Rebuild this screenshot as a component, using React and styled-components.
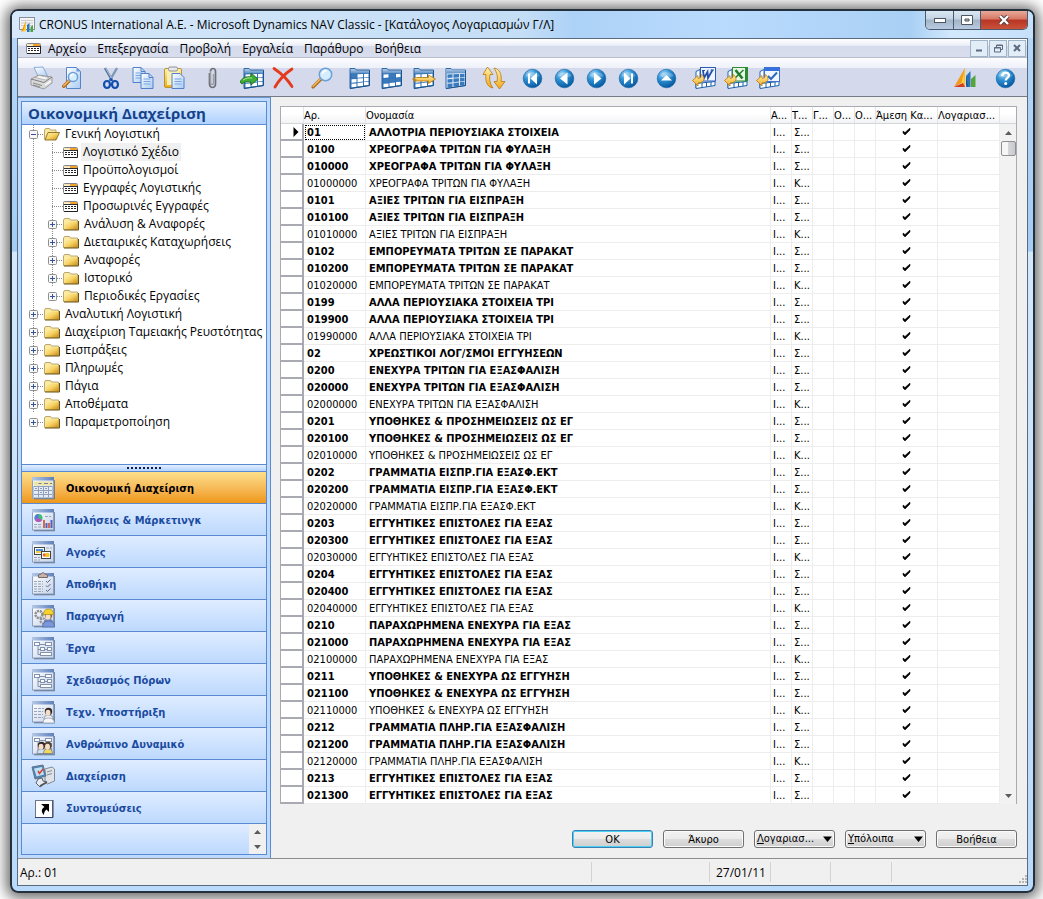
import React from "react";
import styled, { createGlobalStyle, css } from "styled-components";

const uiFont = `"Open Sans", "Noto Sans", sans-serif`;
const gridFont = `"DejaVu Sans Condensed", "DejaVu Sans", sans-serif`;

const Global = createGlobalStyle`
  * { box-sizing: border-box; }
  body { margin: 0; background: #fff; color: #000; font-family: ${uiFont}; font-size: 12px; }
  button { font: inherit; color: inherit; padding: 0; margin: 0; border: 0; background: none; }
  svg { display: block; }
`;

/* ---------- window frame ---------- */

const Desktop = styled.div`
  padding: 9px 8px 8px 10px;
  background: #fff;
`;

const Window = styled.div`
  border: 2px solid #24303c;
  border-radius: 8px;
  background: linear-gradient(#b7d8f8 0, #a4ccf4 240px, #d3e8fb 241px, #b9dafb 100%);
  box-shadow: 0 1px 14px 4px rgba(0, 0, 0, 0.6);
  padding: 0 5px 5px;
`;

const TitleBar = styled.header`
  display: flex;
  align-items: center;
  height: 27px;
  margin: 0 -5px;
  padding: 0 5px 0 7px;
  border-radius: 6px 6px 0 0;
  background: linear-gradient(90deg, #d6e8fa 0, #c4def6 50%, #add2f7 55%, #b9dbfd 70%, #a9d0f4 88%, #d2e8fd 92%, #c6e0fa 100%);
`;

const WindowTitle = styled.h1`
  flex: 1;
  margin: 0 0 0 4px;
  font-size: 12px;
  font-weight: 400;
  line-height: 20px;
  white-space: nowrap;
`;

const CaptionButtons = styled.div`
  display: flex;
  align-self: flex-start;
  height: 19px;
  border: 1px solid #4b5a6c;
  border-top: 0;
  border-radius: 0 0 5px 5px;
  overflow: hidden;
`;

const CaptionButton = styled.button`
  display: flex;
  align-items: center;
  justify-content: center;
  width: ${(p) => (p.$close ? 47 : 27)}px;
  border-left: ${(p) => (p.$first ? "0" : "1px solid #4b5a6c")};
  background: ${(p) =>
    p.$close
      ? "linear-gradient(#e9a99a 0, #d77763 45%, #b93524 50%, #c9523a 100%)"
      : "linear-gradient(#dbe7f3 0, #c3d2e2 45%, #a1b4c8 50%, #b8cbe0 100%)"};
`;

const Client = styled.div`
  border: 1px solid #5b6b7e;
  background: #f0f0f0;
`;

/* ---------- menu and tool bars ---------- */

const MenuBar = styled.nav`
  display: flex;
  align-items: center;
  height: 19px;
  padding: 0 1px 0 8px;
  border-bottom: 1px solid #b6bccc;
  background: linear-gradient(#fff 0, #eceff8 35%, #d6dbec 40%, #d9deef 100%);
`;

const MenuItems = styled.div`
  display: flex;
  flex: 1;
  gap: 11px;
  margin-left: 7px;
`;

const MenuItem = styled.button`
  padding-top: 2px;
  line-height: 18px;
  white-space: nowrap;
`;

const ChildButtons = styled.div`
  display: flex;
  gap: 1px;
`;

const ChildButton = styled.button`
  display: flex;
  align-items: center;
  justify-content: center;
  width: 18px;
  height: 17px;
  border: 1px solid #a0b4c8;
  background: #e2edf8;
`;

const ToolBar = styled.div`
  display: flex;
  align-items: center;
  gap: 14px;
  height: 39px;
  padding: 2px 10px 0 12px;
  border-bottom: 1px solid #767b88;
  background: linear-gradient(#fdfdff 0, #eef1f9 25%, #d4daec 26%, #d4daec 100%);
`;

const ToolGroup = styled.div`
  display: flex;
  gap: ${(p) => (p.$end ? 16 : 8)}px;
  margin-left: ${(p) => (p.$end ? "auto" : "0")};
`;

const ToolButton = styled.button`
  width: 24px;
  height: 24px;
`;

/* ---------- body ---------- */

const Body = styled.div`
  display: flex;
`;

const Sidebar = styled.aside`
  display: flex;
  width: 253px;
  flex: none;
  padding: 3px;
  border-top: 1px solid #6a97d6;
  border-right: 1px solid #5a8bd0;
  background: #bfdaff;
`;

const SidePanel = styled.div`
  display: flex;
  flex-direction: column;
  flex: 1;
  border: 1px solid #5a8bd0;
  background: #fff;
`;

const SideTitle = styled.h2`
  margin: 0;
  height: 23px;
  padding-left: 6px;
  border-bottom: 1px solid #5a8bd0;
  background: linear-gradient(#e3efff, #afd2ff);
  color: #15428b;
  font: 700 15px/22px ${uiFont};
  white-space: nowrap;
`;

const Tree = styled.ul`
  flex: 1;
  list-style: none;
  margin: 0;
  padding: 0 0 0 7px;
`;

const SubTree = styled.ul`
  list-style: none;
  margin: 0;
  padding: 0 0 0 19px;
  background: linear-gradient(#8a8a8a 50%, transparent 50%) 4px 0 / 1px 2px repeat-y;
`;

const dotsDown = css`
  background-image: linear-gradient(#8a8a8a 50%, transparent 50%);
  background-size: 1px 2px;
  background-position: 4px 0;
  background-repeat: repeat-y;
`;

const TreeRow = styled.div`
  display: flex;
  align-items: center;
  height: 18px;
  ${(p) => !p.$last && dotsDown}
`;

const Expander = styled.button`
  width: 9px;
  height: 9px;
  flex: none;
`;

const Stem = styled.span`
  width: ${(p) => (p.$long ? 11 : 6)}px;
  margin-left: ${(p) => (p.$long ? 4 : 0)}px;
  height: 1px;
  flex: none;
  background: repeating-linear-gradient(90deg, #8a8a8a 0 1px, transparent 1px 2px);
`;

const TreeLabel = styled.a`
  margin-left: 3px;
  padding: 0 2px;
  line-height: 18px;
  background: ${(p) => (p.$selected ? "#f0f0f0" : "transparent")};
  color: #000;
  text-decoration: none;
  white-space: nowrap;
`;

const Splitter = styled.div`
  display: flex;
  align-items: center;
  justify-content: center;
  height: 8px;
  border-top: 1px solid #5a8bd0;
  border-bottom: 1px solid #5a8bd0;
  background: linear-gradient(#e3efff, #b4d3ff);
`;

const SplitterDots = styled.span`
  width: 34px;
  height: 2px;
  background: repeating-linear-gradient(90deg, #10204a 0 2px, transparent 2px 4px);
`;

const NavButton = styled.button`
  display: flex;
  align-items: center;
  gap: 11px;
  height: 32px;
  padding-left: 9px;
  border-bottom: 1px solid #5a8bd0;
  background: ${(p) =>
    p.$active ? "linear-gradient(#fddf8b, #f6b550 60%, #ee9719)" : "linear-gradient(#dfecff, #bdd9ff)"};
  color: ${(p) => (p.$active ? "#000" : "#1b4ba0")};
  font: 700 11px/16px ${gridFont};
  white-space: nowrap;
`;

const NavLabel = styled.span`
  padding-top: 2px;
`;

const NavFooter = styled.div`
  display: flex;
  justify-content: flex-end;
  height: 30px;
  background: linear-gradient(#dfecff, #bdd9ff);
`;

const Spinner = styled.div`
  display: flex;
  flex-direction: column;
  width: 17px;
  background: #f0f0f0;
`;

const ArrowButton = styled.button`
  display: flex;
  align-items: center;
  justify-content: center;
  height: ${(p) => (p.$tall ? 17 : 15)}px;
`;

/* ---------- account grid ---------- */

const Main = styled.main`
  flex: 1;
  min-width: 0;
  padding: 9px 10px 10px 9px;
`;

const GridFrame = styled.div`
  display: flex;
  border: 1px solid #a9aab4;
  border-bottom: 0;
  background: #fff;
`;

const Grid = styled.table`
  flex: 1;
  width: 100%;
  min-width: 0;
  table-layout: fixed;
  border-collapse: separate;
  border-spacing: 0;
  font: 11px/14px ${gridFont};
`;

const Col = styled.col`
  width: ${(p) => (p.$w ? `${p.$w}px` : "auto")};
`;

const HeadCell = styled.th`
  height: 17px;
  padding: 2px 0 0;
  border-right: 1px solid #e2e4e8;
  border-bottom: 1px solid #d5d5d5;
  background: linear-gradient(#fff 40%, #f2f3f5);
  font-weight: 400;
  text-align: left;
  white-space: nowrap;
  overflow: hidden;
`;

const SelectorCell = styled.td`
  height: 17px;
  padding: 0;
  border-right: 2px solid #a9a9b1;
  border-bottom: 2px solid #a9a9b1;
`;

const Cell = styled.td`
  height: 17px;
  padding: 2px 0 0 ${(p) => (p.$pad === undefined ? 2 : p.$pad)}px;
  border-right: 1px solid #ededed;
  border-bottom: 1px solid #ededed;
  font-weight: ${(p) => (p.$bold ? 700 : 400)};
  white-space: nowrap;
  overflow: hidden;
  outline: ${(p) => (p.$focus ? "1px dotted #000" : "none")};
  outline-offset: -2px;
`;

const Scroller = styled.div`
  display: flex;
  flex-direction: column;
  width: 16px;
  flex: none;
  background: #f2f2f2;
`;

const ScrollHead = styled.div`
  height: 17px;
  background: linear-gradient(#fff 40%, #f2f3f5);
  border-bottom: 1px solid #d5d5d5;
`;

const ScrollTrack = styled.div`
  flex: 1;
`;

const ScrollThumb = styled.div`
  align-self: flex-end;
  width: 15px;
  height: 15px;
  border: 1px solid #8e8f94;
  border-radius: 2px;
  background: linear-gradient(90deg, #f6f6f6 45%, #d6d6d9 50%, #c9cacd);
`;

const Actions = styled.div`
  display: flex;
  justify-content: flex-end;
  gap: 10px;
  margin-top: 26px;
`;

const ActionButton = styled.button`
  display: flex;
  align-items: center;
  justify-content: ${(p) => (p.$menu ? "space-between" : "center")};
  width: 81px;
  height: 18px;
  padding: ${(p) => (p.$menu ? "0 2px" : "2px 0 0")};
  border: ${(p) => (p.$primary ? "1px solid #3c7fb1" : "1px solid #707070")};
  border-radius: 3px;
  box-shadow: inset 0 0 0 1px ${(p) => (p.$primary ? "#48d1f5" : "#fbfbfb")};
  background: linear-gradient(#f2f2f2 0, #ebebeb 48%, #dddddd 50%, #cfcfcf 100%);
  font: 11px/14px ${gridFont};
  white-space: nowrap;
`;

const StatusBar = styled.footer`
  display: flex;
  align-items: center;
  height: 27px;
  border-top: 1px solid #8d8d8d;
  background: #f0f0f0;
  line-height: 22px;
`;

const StatusCell = styled.div`
  flex: ${(p) => (p.$w ? "none" : "1")};
  width: ${(p) => (p.$w ? `${p.$w}px` : "auto")};
  height: 20px;
  padding-left: ${(p) => (p.$w ? 6 : 2)}px;
  border-left: ${(p) => (p.$w ? "1px solid #d8d0d0" : "0")};
`;

const Grip = styled.div`
  align-self: flex-end;
  width: 11px;
  height: 12px;
`;

/* ---------- drawings ---------- */

const Svg = ({ s = 24, h, vb, children }) => (
  <svg width={s} height={h || s} viewBox={vb || `0 0 ${s} ${h || s}`} fill="none" aria-hidden="true">
    {children}
  </svg>
);

const GradientStore = styled.svg`
  position: absolute;
`;

const Defs = () => (
  <GradientStore width="0" height="0" aria-hidden="true">
    <defs>
      <radialGradient id="ball" cx="35%" cy="25%" r="80%">
        <stop offset="0" stopColor="#9bd4f5" />
        <stop offset="0.45" stopColor="#2d8fd2" />
        <stop offset="1" stopColor="#04549a" />
      </radialGradient>
      <linearGradient id="paper" x1="0" y1="0" x2="1" y2="1">
        <stop offset="0" stopColor="#ffffff" />
        <stop offset="1" stopColor="#a9cbf3" />
      </linearGradient>
      <linearGradient id="gold" x1="0" y1="0" x2="0" y2="1">
        <stop offset="0" stopColor="#fff2ad" />
        <stop offset="1" stopColor="#f0a91b" />
      </linearGradient>
      <linearGradient id="folder" x1="0" y1="0" x2="1" y2="1">
        <stop offset="0" stopColor="#fff3b0" />
        <stop offset="0.5" stopColor="#f6d263" />
        <stop offset="1" stopColor="#c98a12" />
      </linearGradient>
      <linearGradient id="tableBlue" x1="0" y1="0" x2="0" y2="1">
        <stop offset="0" stopColor="#b4cbe3" />
        <stop offset="1" stopColor="#5c90c4" />
      </linearGradient>
      <linearGradient id="navHead" x1="0" y1="0" x2="1" y2="0">
        <stop offset="0" stopColor="#b4c8e6" />
        <stop offset="1" stopColor="#5d80ba" />
      </linearGradient>
      <linearGradient id="navPage" x1="0" y1="0" x2="1" y2="1">
        <stop offset="0" stopColor="#ffffff" />
        <stop offset="1" stopColor="#c6d3e8" />
      </linearGradient>
    </defs>
  </GradientStore>
);

const Ball = ({ children }) => (
  <Svg>
    <circle cx="12.500" cy="12.500" r="9.300" fill="url(#ball)" stroke="#0b5fa5" strokeWidth="0.6" />
    <path d="M5.500 10a7.500 6 0 0 1 14 0q-7 3-14 0z" fill="#fff" opacity="0.25" />
    {children}
  </Svg>
);

const Lens = ({ x, y, r }) => (
  <g>
    <path d={`M${x - r * 0.7} ${y + r * 0.7}L${x - r * 2} ${y + r * 2}`} stroke="#b06a1c" strokeWidth="3.4" strokeLinecap="round" />
    <path d={`M${x - r * 0.8} ${y + r * 0.7}L${x - r * 2} ${y + r * 1.9}`} stroke="#f2b45c" strokeWidth="1.6" strokeLinecap="round" />
    <circle cx={x} cy={y} r={r} fill="#d6ecff" stroke="#6aa0d8" strokeWidth="1.5" />
    <path d={`M${x - r * 0.5} ${y - r * 0.1}a${r * 0.6} ${r * 0.6} 0 0 1 ${r * 0.7} ${-r * 0.5}`} stroke="#fff" strokeWidth="1.6" />
  </g>
);

const cellLeft = [3.5, 9.5, 16];
const cellRight = [8.5, 15, 20.5];
const cellTops = [[8.5, 8.2, 8], [13.2, 12.6, 12], [17.8, 16.9, 16]];

const TableSheet = ({ fills, dark }) => (
  <g>
    <path d="M2 2.500h5l1.500 1.500h13v15.500L2 22.500z" fill={dark ? "#dceaf8" : "#3271b5"} stroke="#2a69aa" />
    <path d="M2.500 3h4.500l1.500 1.500h12.500V7l-18.500.5z" fill="url(#tableBlue)" />
    {[0, 1, 2].map((r) =>
      [0, 1, 2].map((c) => {
        const l = cellLeft[c];
        const rt = cellRight[c];
        const y = cellTops[r][c];
        return (
          <path
            key={`${r}${c}`}
            d={`M${l} ${y}L${rt} ${y - 0.3}V${y + 3}L${l} ${y + 3.6}z`}
            fill={fills[r][c] ? "#fff" : "#3b7bbd"}
          />
        );
      })
    )}
    <path d="M2 22.500l19.500-3V4.500" stroke="#1b558f" />
  </g>
);

const GoldArrow = ({ d }) => <path d={d} fill="url(#gold)" stroke="#b9770c" strokeWidth="0.8" strokeLinejoin="round" />;

const Export = ({ children }) => (
  <Svg>
    <path d="M4 5.500l4-2v17l-4 1.500z" fill="#fff" stroke="#1d62ab" />
    <path d="M4 22.500l19-3v-4l-19 2z" fill="#fff" stroke="#1d62ab" />
    <path d="M10 17v4.500M14.500 16v5M19 16v4" stroke="#1d62ab" />
    {children}
    <GoldArrow d="M0.500 14.500L6 9.500v2.800c3 0 3.500-1.500 3-3.800 4 2 5 8-3 8.500V20z" />
  </Svg>
);

const all = [[1, 1, 1], [1, 1, 1], [1, 1, 1]];

const toolIcons = {
  print: (
    <Svg>
      <path d="M4 1.500l9-.5 5 10-9 1z" fill="url(#paper)" stroke="#6f9bd2" strokeWidth="0.8" />
      <path d="M1 13l8-4 13 2v6l-8 6-13-4z" fill="#d9d9d9" stroke="#8b8b8b" strokeWidth="0.8" />
      <path d="M1 13l13 3.500 8-5.500" stroke="#777" strokeWidth="0.9" />
      <path d="M5 11.500l11 2.500 3-2.500-10-2z" fill="#f8f8f8" stroke="#999" strokeWidth="0.6" />
      <path d="M3 17l9 2.500M3 19l7 2" stroke="#888" />
      <path d="M15 19l6-4" stroke="#fff" strokeWidth="1.5" />
    </Svg>
  ),
  preview: (
    <Svg>
      <path d="M4.500 1.500h10l4 4v17h-14z" fill="url(#paper)" stroke="#5585c8" />
      <path d="M14.500 1.500v4h4z" fill="#6c9bdb" />
      <Lens x={11} y={11} r={4.600} />
    </Svg>
  ),
  cut: (
    <Svg>
      <path d="M5 2l7.500 13" stroke="#4d6b94" strokeWidth="2.400" />
      <path d="M17 2l-7.500 13" stroke="#7e97b8" strokeWidth="2.400" />
      <path d="M5.500 2l7 12" stroke="#dbe5f0" strokeWidth="0.7" />
      <ellipse cx="7" cy="18.500" rx="3" ry="3.500" stroke="#124fae" strokeWidth="2.200" />
      <ellipse cx="15" cy="18.500" rx="3" ry="3.500" stroke="#124fae" strokeWidth="2.200" />
      <circle cx="11" cy="13.500" r="1.500" fill="#124fae" />
    </Svg>
  ),
  copy: (
    <Svg>
      {[[1, 1.500], [9, 7.500]].map(([x, y]) => (
        <g key={x}>
          <path d={`M${x} ${y}h8l4 4v11h-12z`} fill="url(#paper)" stroke="#4f80c9" />
          <path d={`M${x + 8} ${y}v4h4`} stroke="#4f80c9" />
          <path d={`M${x + 2.500} ${y + 5.500}h7M${x + 2.500} ${y + 8}h7M${x + 2.500} ${y + 10.500}h7`} stroke="#76a5e2" />
        </g>
      ))}
    </Svg>
  ),
  paste: (
    <Svg>
      <rect x="0.500" y="2.500" width="17" height="19" rx="1.500" fill="url(#gold)" stroke="#b7952c" />
      <rect x="3" y="5" width="12" height="14" fill="#f9efb2" />
      <rect x="4.500" y="1" width="9" height="4" rx="1.500" fill="#e7e7ea" stroke="#8f8f98" />
      <path d="M8 7.500h8l4 4v11h-12z" fill="url(#paper)" stroke="#4f80c9" />
      <path d="M10.500 13h7M10.500 15.500h7M10.500 18h7" stroke="#76a5e2" />
    </Svg>
  ),
  attach: (
    <Svg>
      <path d="M7.500 7v11a3 3.500 0 0 0 6 0V5.500a2.500 3 0 0 0-5 0" stroke="#6d7076" strokeWidth="1.700" />
      <path d="M8.500 5.500v11.500a1.500 1.500 0 0 0 3 0V8" stroke="#9b9ea4" strokeWidth="1.500" />
    </Svg>
  ),
  insert: (
    <Svg>
      <g transform="translate(2 0)"><TableSheet fills={all} /></g>
      <path d="M0 16c2-4 6-6 11-5V7l7 6-7 6v-3c-4-1-7 0-9 2z" fill="#3fae35" stroke="#176a1b" strokeWidth="0.9" />
      <path d="M3 14c3-2 6-2.500 9-2" stroke="#b8ee9b" />
    </Svg>
  ),
  remove: (
    <Svg>
      <path d="M2 2.500c6 4 13 10 18 18M20 3C14 7 7 14 3 21" stroke="#e4391b" strokeWidth="2.800" strokeLinecap="round" />
    </Svg>
  ),
  find: (
    <Svg>
      <Lens x={15.500} y={8.500} r={6.200} />
    </Svg>
  ),
  t1: <Svg><TableSheet fills={[[0, 1, 1], [1, 1, 1], [1, 1, 1]]} /></Svg>,
  t2: <Svg><TableSheet fills={[[1, 0, 1], [0, 0, 0], [1, 1, 1]]} /></Svg>,
  t3: (
    <Svg>
      <TableSheet fills={all} />
      <GoldArrow d="M0.500 13l4-1.500h12V9l7 4-7 4.500V15h-15l3-1z" />
    </Svg>
  ),
  t4: <Svg><TableSheet dark fills={[[0, 0, 0], [0, 0, 0], [0, 0, 0]]} /></Svg>,
  refresh: (
    <Svg>
      <GoldArrow d="M5.500 1L11 8.500H8c-1 5 0 9 3 13.500-6-1-8-7-7-13.500H1z" />
      <GoldArrow d="M17.500 23L12 15.500h3c1-5 0-9-3-13.500 6 1 8 7 7 13.500h4z" />
    </Svg>
  ),
  first: <Ball><path d="M9 7.500v10" stroke="#fff" strokeWidth="2" /><path d="M17 6.500v12l-6.500-6z" fill="#fff" /></Ball>,
  prev: <Ball><path d="M15.500 6.500v12l-7.500-6z" fill="#fff" /></Ball>,
  next: <Ball><path d="M10 6.500v12l7.500-6z" fill="#fff" /></Ball>,
  last: <Ball><path d="M16 7.500v10" stroke="#fff" strokeWidth="2" /><path d="M8 6.500v12l6.500-6z" fill="#fff" /></Ball>,
  up: <Ball><path d="M7 14.500h11l-5.500-5.500z" fill="#fff" /></Ball>,
  word: (
    <Export>
      <rect x="8.500" y="1.500" width="15" height="13.500" fill="#eef4ff" stroke="#2c5cb8" />
      <path d="M11 4.500l1 7.500 3.500-6 .5 6 4.500-8" stroke="#2450a8" strokeWidth="1.800" />
      <path d="M10 4.500h3M18.500 4h3.500" stroke="#2450a8" />
    </Export>
  ),
  excel: (
    <Export>
      <rect x="8.500" y="1.500" width="15" height="13.500" fill="#e9f6e6" stroke="#2c8a35" />
      <path d="M22 2v13" stroke="#2c8a35" strokeWidth="2" />
      <path d="M11.500 4l7 8.500" stroke="#1f7a2a" strokeWidth="2.600" />
      <path d="M19.500 4l-9 8.500" stroke="#1f7a2a" strokeWidth="1.400" />
    </Export>
  ),
  check: (
    <Export>
      <rect x="8.500" y="1.500" width="15" height="14" fill="#f2f7ff" stroke="#3c74cf" />
      <path d="M8.500 1.500h15v3.500h-15z" fill="#3670dc" />
      <path d="M12 10l3 3 6-6.500" stroke="#2c69bd" strokeWidth="2" />
    </Export>
  ),
  dynamics: (
    <Svg>
      <path d="M1 21L12 2v13z" fill="#f39a1c" />
      <path d="M12 2l-1 14-3 3z" fill="#ffd52e" />
      <path d="M12 2v19l-4-2 3-3z" fill="#f7c51f" />
      <path d="M1 21l9-4 2 4z" fill="#d63c1d" />
      <path d="M13 10l4.500-5v16H13z" fill="#2a72b9" />
      <path d="M18 13l4.500-4v12H18z" fill="#55a63a" />
      <path d="M15 21l-2-3v-8z" fill="#1a4f8d" />
    </Svg>
  ),
  help: (
    <Ball>
      <path d="M9.300 10c0-4.500 6.600-4.500 6.600-.6 0 2.400-3.200 2.400-3.200 5.100" stroke="#fff" strokeWidth="2.300" />
      <circle cx="12.700" cy="17.600" r="1.500" fill="#fff" />
    </Ball>
  ),
};

const AppIcon = () => (
  <Svg s={16}>
    <rect x="0.500" y="0.500" width="15" height="12" fill="#f4f4f4" stroke="#8a8f98" />
    <path d="M2 3.500h12M2 6h12M2 8.500h12" stroke="#b5bac2" strokeWidth="0.7" />
    <path d="M2 15l5-11v8z" fill="#f08a1a" />
    <path d="M7 4v10l-3 1z" fill="#ffcf27" />
    <path d="M8 8l2.500-2v9H8z" fill="#2a72b9" />
    <path d="M11.500 10l2.500-2v7h-2.500z" fill="#4ca53a" />
  </Svg>
);

const FormIcon = () => (
  <Svg s={15} h={11}>
    <rect x="0.500" y="0.500" width="14" height="10" rx="1" fill="#fff" stroke="#85858d" />
    <path d="M1 1h13v1.500H1z" fill="#fbe3b0" />
    <path d="M7 1h7v2H7z" fill="#f0a22b" />
    <path d="M1 3.500h13" stroke="#2d2d33" />
    <path d="M2 5.500h11M2 7.500h11" stroke="#222" strokeDasharray="2 1" />
    <path d="M1 10.500h13.500V3" stroke="#222" />
  </Svg>
);

const FolderIcon = ({ open }) => (
  <Svg s={16} h={13}>
    {open ? (
      <>
        <path d="M.5 11.500V2l1-1.500h4l1 1.500h5.500V5" fill="#fbe9a0" stroke="#a8935a" strokeWidth="0.8" />
        <path d="M1 12L4 4.500h11.500L12 12z" fill="url(#folder)" stroke="#7d5d10" strokeWidth="0.8" />
      </>
    ) : (
      <>
        <path d="M.5 11.500V2l1-1.500h5l1 1.500h7v9.500z" fill="#fbe9a0" stroke="#a8935a" strokeWidth="0.8" />
        <path d="M1.500 3.500h13v8h-13z" fill="url(#folder)" />
        <path d="M1 12h14.500V3" stroke="#6a5010" />
      </>
    )}
  </Svg>
);

const SignIcon = ({ open }) => (
  <Svg s={9}>
    <rect x="0.500" y="0.500" width="8" height="8" rx="1" fill="#f7f7f7" stroke="#8f8f8f" />
    <path d={open ? "M2 4.500h5" : "M2 4.500h5M4.500 2v5"} stroke="#34539c" />
  </Svg>
);

const Page = ({ children }) => (
  <Svg>
    <path d="M3 22.500h20V4" stroke="#5c6c86" strokeWidth="1.500" />
    <rect x="1.500" y="1.500" width="21" height="20.500" fill="url(#navPage)" stroke="#8fa1c0" />
    <path d="M1 1h22v3.500H1z" fill="url(#navHead)" />
    {children}
  </Svg>
);

const Flow = () => (
  <g stroke="#8292ad" fill="#fff">
    <path d="M7 8.500h8M7 10v8.500h3M7 13.500h3M13 13.500h3" fill="none" />
    <rect x="3.500" y="6.500" width="5" height="3" />
    <rect x="14.500" y="6.500" width="6" height="3" />
    <rect x="9.500" y="11.500" width="4" height="3" />
    <rect x="16.500" y="11.500" width="4" height="3" />
    <rect x="9.500" y="16.500" width="11" height="3" />
  </g>
);

const Head = ({ x, y, hair, body }) => (
  <g>
    <path d={`M${x - 4.500} ${y + 8}q0-4.500 4.500-4.500t4.500 4.500z`} fill={body} stroke="#6b7280" strokeWidth="0.7" />
    <circle cx={x} cy={y} r="3.700" fill={hair} />
    <ellipse cx={x - 0.500} cy={y + 1.200} rx="2.500" ry="3" fill="#f6ddc6" />
  </g>
);

const navIcons = {
  finance: (
    <Page>
      <path d="M2.500 5.500h19v4h-19z" fill="#f0e6a4" />
      <path d="M2.500 10h19v11h-19z" fill="#8fa0bd" />
      {[0, 1, 2].map((r) => [0, 1, 2, 3].map((c) => (
        <rect key={`${r}${c}`} x={3 + c * 5} y={11 + r * 4} width={c === 3 ? 3 : 4} height={r === 2 ? 2 : 3} fill="#e6ebf4" />
      )))}
      <path d="M7.500 7.500h3M13 7.500h4M19 7.500h2" stroke="#77809a" />
      <path d="M4 12.500h2M9 12.500h2M14 12.500h2M9 16.500h2M14 16.500h2" stroke="#9099ae" />
    </Page>
  ),
  sales: (
    <Page>
      <circle cx="7.500" cy="10" r="4" fill="#3fbf75" />
      <path d="M7.500 10V6a4 4 0 0 0-3.500 6z" fill="#5d78de" />
      <path d="M7.500 10L4 12a4 4 0 0 0 7 0z" fill="#c54bc8" />
      <path d="M14 8.500h6M3 16.500h7M3 19h7" stroke="#98a6bd" strokeDasharray="3 1" />
      <path d="M13 12v8M18 15v5" stroke="#d36a52" strokeWidth="2" />
      <path d="M15.500 15v5M20.500 12v8" stroke="#5661bd" strokeWidth="2" />
    </Page>
  ),
  purchase: (
    <Page>
      <path d="M3 17.500h6M3 20h6M15 8h6" stroke="#9aa7bc" strokeDasharray="3 1" />
      <rect x="3.500" y="7.500" width="10" height="7" fill="#fff" stroke="#444" />
      <path d="M5 9h7v2H5z" fill="#4f91e0" /><path d="M5 11h7v2H5z" fill="#f4ca3e" />
      <rect x="10.500" y="11.500" width="9" height="7" fill="#fff" stroke="#444" />
      <circle cx="13.500" cy="15" r="1.800" fill="#ee6a24" /><circle cx="16.500" cy="15" r="2.200" fill="#f6c52a" />
    </Page>
  ),
  stock: (
    <Page>
      <path d="M7.500 5.500V3l2.500-1 2-1.500 2 1.500 2.500 1v2.500z" fill="#c6b3ac" stroke="#7d6a64" />
      <path d="M3 9.500h9M3 12h9M3 14.500h9M3 17h9M3 19.500h9" stroke="#98a6bd" strokeDasharray="3 1" />
      <path d="M15 9l1.500 1.500 3-3M15 13.500l1.500 1.500 3-3M15 18l1.500 1.500 3-3" stroke="#5d6f8f" />
    </Page>
  ),
  production: (
    <Page>
      <circle cx="8" cy="10.500" r="3.500" stroke="#8d8d92" strokeWidth="2.500" strokeDasharray="2 .8" />
      <circle cx="12" cy="17" r="2.500" stroke="#8d8d92" strokeWidth="2" strokeDasharray="2 .8" />
      <Head x={17.500} y={11.500} hair="#8c6a42" body="#6f8ed4" />
      <path d="M12.500 10.500q0-5.500 5-5.500t5 5.500z" fill="#f4d32f" stroke="#ab8a10" strokeWidth="0.700" />
      <path d="M11.500 23q0-6 6-6t6 6z" fill="#7b97d8" stroke="#4a66a5" strokeWidth="0.700" />
    </Page>
  ),
  jobs: <Page><Flow /></Page>,
  support: (
    <Page>
      <path d="M3 8.500h10M3 11.500h9M3 14.500h9M3 17.500h9" stroke="#98a6bd" strokeDasharray="3 1" />
      <Head x={17.500} y={11.500} hair="#2d2522" body="#eef0f5" />
      <path d="M12 23q0-5 5.500-5t6 5z" fill="#f4f6fb" stroke="#8890a2" strokeWidth="0.700" />
    </Page>
  ),
  hr: (
    <Page>
      <Flow />
      <Head x={10.500} y={13.500} hair="#2d2522" body="#cfe0f4" />
      <Head x={17} y={13.500} hair="#55402e" body="#f4d858" />
    </Page>
  ),
  admin: (
    <Svg>
      <path d="M14 5l7-2 2.500 2v12l-7 3-2.500-2z" fill="#dfe3e8" stroke="#808a96" />
      <path d="M16 8l5-1.500M16 11l5-1.500" stroke="#848c96" />
      <path d="M1 3l11-2 3 11-11 3z" fill="#4d83b8" stroke="#67737f" />
      <path d="M3 4.500l8-1.500 2 7.500-7.500 2z" fill="#bfe1f8" />
      <path d="M7 7l1.500 2.500L12 5" stroke="#dc3c2c" strokeWidth="1.500" />
      <path d="M7 15l4-1 1 3 4 1-7 5-4-4z" fill="#e8ebef" stroke="#59636e" />
      <path d="M9 22l7-4" stroke="#555" strokeWidth="1.500" />
    </Svg>
  ),
  shortcuts: (
    <Svg>
      <rect x="4.500" y="4.500" width="17" height="17" fill="#fff" stroke="#6d7787" />
      <path d="M4 21.500h18V4" stroke="#35435e" />
      <path d="M10 8h8v8l-2.500-2.500c-2 1.500-2.500 3-2.500 5.500-3-3-3-6 .5-8z" fill="#000" />
    </Svg>
  ),
};

const TriUp = () => <Svg s={7} h={4}><path d="M0 4L3.500 0 7 4z" fill="#5b5b5b" /></Svg>;
const TriDown = () => <Svg s={7} h={4}><path d="M0 0h7L3.500 4z" fill="#5b5b5b" /></Svg>;
const MenuTri = () => <Svg s={9} h={6}><path d="M0 .5h9L4.500 6z" fill="#000" /></Svg>;
const RowMark = styled(({ className }) => (
  <svg className={className} width="6" height="10" viewBox="0 0 6 10"><path d="M.5 0v10l5-5z" fill="#000" /></svg>
))`
  margin-left: 12px;
`;
const Tick = styled(({ className }) => (
  <svg className={className} width="9" height="7" viewBox="0 0 9 7"><path d="M1 3v2l2 2 5-5V0L3 4.500z" fill="#000" stroke="#000" strokeWidth="0.500" /></svg>
))`
  margin: -4px auto 0;
`;

/* ---------- data ---------- */

const menus = ["Αρχείο", "Επεξεργασία", "Προβολή", "Εργαλεία", "Παράθυρο", "Βοήθεια"];

const toolGroups = [
  ["print", "preview"],
  ["cut", "copy", "paste"],
  ["attach"],
  ["insert", "remove"],
  ["find"],
  ["t1", "t2", "t3", "t4"],
  ["refresh"],
  ["first", "prev", "next", "last"],
  ["up"],
  ["word", "excel", "check"],
];

const forms = ["Λογιστικό Σχέδιο", "Προϋπολογισμοί", "Εγγραφές Λογιστικής", "Προσωρινές Εγγραφές"];
const subFolders = ["Ανάλυση & Αναφορές", "Διεταιρικές Καταχωρήσεις", "Αναφορές", "Ιστορικό", "Περιοδικές Εργασίες"];
const folders = [
  "Αναλυτική Λογιστική",
  "Διαχείριση Ταμειακής Ρευστότητας",
  "Εισπράξεις",
  "Πληρωμές",
  "Πάγια",
  "Αποθέματα",
  "Παραμετροποίηση",
];

const areas = [
  ["finance", "Οικονομική Διαχείριση"],
  ["sales", "Πωλήσεις & Μάρκετινγκ"],
  ["purchase", "Αγορές"],
  ["stock", "Αποθήκη"],
  ["production", "Παραγωγή"],
  ["jobs", "Έργα"],
  ["jobs", "Σχεδιασμός Πόρων"],
  ["support", "Τεχν. Υποστήριξη"],
  ["hr", "Ανθρώπινο Δυναμικό"],
  ["admin", "Διαχείριση"],
  ["shortcuts", "Συντομεύσεις"],
];

const accounts = [
  ["01", "ΑΛΛΟΤΡΙΑ ΠΕΡΙΟΥΣΙΑΚΑ ΣΤΟΙΧΕΙΑ"],
  ["0100", "ΧΡΕΟΓΡΑΦΑ ΤΡΙΤΩΝ ΓΙΑ ΦΥΛΑΞΗ"],
  ["010000", "ΧΡΕΟΓΡΑΦΑ ΤΡΙΤΩΝ ΓΙΑ ΦΥΛΑΞΗ"],
  ["01000000", "ΧΡΕΟΓΡΑΦΑ ΤΡΙΤΩΝ ΓΙΑ ΦΥΛΑΞΗ"],
  ["0101", "ΑΞΙΕΣ ΤΡΙΤΩΝ ΓΙΑ ΕΙΣΠΡΑΞΗ"],
  ["010100", "ΑΞΙΕΣ ΤΡΙΤΩΝ ΓΙΑ ΕΙΣΠΡΑΞΗ"],
  ["01010000", "ΑΞΙΕΣ ΤΡΙΤΩΝ ΓΙΑ ΕΙΣΠΡΑΞΗ"],
  ["0102", "ΕΜΠΟΡΕΥΜΑΤΑ ΤΡΙΤΩΝ ΣΕ ΠΑΡΑΚΑΤ"],
  ["010200", "ΕΜΠΟΡΕΥΜΑΤΑ ΤΡΙΤΩΝ ΣΕ ΠΑΡΑΚΑΤ"],
  ["01020000", "ΕΜΠΟΡΕΥΜΑΤΑ ΤΡΙΤΩΝ ΣΕ ΠΑΡΑΚΑΤ"],
  ["0199", "ΑΛΛΑ ΠΕΡΙΟΥΣΙΑΚΑ ΣΤΟΙΧΕΙΑ ΤΡΙ"],
  ["019900", "ΑΛΛΑ ΠΕΡΙΟΥΣΙΑΚΑ ΣΤΟΙΧΕΙΑ ΤΡΙ"],
  ["01990000", "ΑΛΛΑ ΠΕΡΙΟΥΣΙΑΚΑ ΣΤΟΙΧΕΙΑ ΤΡΙ"],
  ["02", "ΧΡΕΩΣΤΙΚΟΙ ΛΟΓ/ΣΜΟΙ ΕΓΓΥΗΣΕΩΝ"],
  ["0200", "ΕΝΕΧΥΡΑ ΤΡΙΤΩΝ ΓΙΑ ΕΞΑΣΦΑΛΙΣΗ"],
  ["020000", "ΕΝΕΧΥΡΑ ΤΡΙΤΩΝ ΓΙΑ ΕΞΑΣΦΑΛΙΣΗ"],
  ["02000000", "ΕΝΕΧΥΡΑ ΤΡΙΤΩΝ ΓΙΑ ΕΞΑΣΦΑΛΙΣΗ"],
  ["0201", "ΥΠΟΘΗΚΕΣ & ΠΡΟΣΗΜΕΙΩΣΕΙΣ ΩΣ ΕΓ"],
  ["020100", "ΥΠΟΘΗΚΕΣ & ΠΡΟΣΗΜΕΙΩΣΕΙΣ ΩΣ ΕΓ"],
  ["02010000", "ΥΠΟΘΗΚΕΣ & ΠΡΟΣΗΜΕΙΩΣΕΙΣ ΩΣ ΕΓ"],
  ["0202", "ΓΡΑΜΜΑΤΙΑ ΕΙΣΠΡ.ΓΙΑ ΕΞΑΣΦ.ΕΚΤ"],
  ["020200", "ΓΡΑΜΜΑΤΙΑ ΕΙΣΠΡ.ΓΙΑ ΕΞΑΣΦ.ΕΚΤ"],
  ["02020000", "ΓΡΑΜΜΑΤΙΑ ΕΙΣΠΡ.ΓΙΑ ΕΞΑΣΦ.ΕΚΤ"],
  ["0203", "ΕΓΓΥΗΤΙΚΕΣ ΕΠΙΣΤΟΛΕΣ ΓΙΑ ΕΞΑΣ"],
  ["020300", "ΕΓΓΥΗΤΙΚΕΣ ΕΠΙΣΤΟΛΕΣ ΓΙΑ ΕΞΑΣ"],
  ["02030000", "ΕΓΓΥΗΤΙΚΕΣ ΕΠΙΣΤΟΛΕΣ ΓΙΑ ΕΞΑΣ"],
  ["0204", "ΕΓΓΥΗΤΙΚΕΣ ΕΠΙΣΤΟΛΕΣ ΓΙΑ ΕΞΑΣ"],
  ["020400", "ΕΓΓΥΗΤΙΚΕΣ ΕΠΙΣΤΟΛΕΣ ΓΙΑ ΕΞΑΣ"],
  ["02040000", "ΕΓΓΥΗΤΙΚΕΣ ΕΠΙΣΤΟΛΕΣ ΓΙΑ ΕΞΑΣ"],
  ["0210", "ΠΑΡΑΧΩΡΗΜΕΝΑ ΕΝΕΧΥΡΑ ΓΙΑ ΕΞΑΣ"],
  ["021000", "ΠΑΡΑΧΩΡΗΜΕΝΑ ΕΝΕΧΥΡΑ ΓΙΑ ΕΞΑΣ"],
  ["02100000", "ΠΑΡΑΧΩΡΗΜΕΝΑ ΕΝΕΧΥΡΑ ΓΙΑ ΕΞΑΣ"],
  ["0211", "ΥΠΟΘΗΚΕΣ & ΕΝΕΧΥΡΑ ΩΣ ΕΓΓΥΗΣΗ"],
  ["021100", "ΥΠΟΘΗΚΕΣ & ΕΝΕΧΥΡΑ ΩΣ ΕΓΓΥΗΣΗ"],
  ["02110000", "ΥΠΟΘΗΚΕΣ & ΕΝΕΧΥΡΑ ΩΣ ΕΓΓΥΗΣΗ"],
  ["0212", "ΓΡΑΜΜΑΤΙΑ ΠΛΗΡ.ΓΙΑ ΕΞΑΣΦΑΛΙΣΗ"],
  ["021200", "ΓΡΑΜΜΑΤΙΑ ΠΛΗΡ.ΓΙΑ ΕΞΑΣΦΑΛΙΣΗ"],
  ["02120000", "ΓΡΑΜΜΑΤΙΑ ΠΛΗΡ.ΓΙΑ ΕΞΑΣΦΑΛΙΣΗ"],
  ["0213", "ΕΓΓΥΗΤΙΚΕΣ ΕΠΙΣΤΟΛΕΣ ΓΙΑ ΕΞΑΣ"],
  ["021300", "ΕΓΓΥΗΤΙΚΕΣ ΕΠΙΣΤΟΛΕΣ ΓΙΑ ΕΞΑΣ"],
];

const columns = [
  [23, ""],
  [62, "Αρ."],
  [0, "Ονομασία"],
  [21, "Α..."],
  [21, "Τ..."],
  [21, "Γ..."],
  [21, "Ο..."],
  [21, "Ο..."],
  [62, "Άμεση Κα..."],
  [62, "Λογαριασ..."],
];

const FolderRow = ({ label, open, last }) => (
  <TreeRow $last={last}>
    <Expander aria-label={label}><SignIcon open={open} /></Expander>
    <Stem />
    <FolderIcon open={open} />
    <TreeLabel href="#">{label}</TreeLabel>
  </TreeRow>
);

export default function App() {
  return (
    <Desktop>
      <Global />
      <Defs />
      <Window>
        <TitleBar>
          <AppIcon />
          <WindowTitle>CRONUS International A.E. - Microsoft Dynamics NAV Classic - [Κατάλογος Λογαριασμών Γ/Λ]</WindowTitle>
          <CaptionButtons>
            <CaptionButton $first aria-label="Minimize">
              <Svg s={12} h={5}><rect x="0.500" y="0.500" width="11" height="4" fill="#fff" stroke="#4d5661" /></Svg>
            </CaptionButton>
            <CaptionButton aria-label="Maximize">
              <Svg s={12} h={10}><path d="M.5.500h11v9H.5zM4 4h4v2H4z" fill="#fff" stroke="#4d5661" fillRule="evenodd" /></Svg>
            </CaptionButton>
            <CaptionButton $close aria-label="Close">
              <Svg s={12} h={10}>
                <path d="M2 1l8 8M10 1L2 9" stroke="#4b3c42" strokeWidth="4" />
                <path d="M2 1l8 8M10 1L2 9" stroke="#fff" strokeWidth="2.300" />
              </Svg>
            </CaptionButton>
          </CaptionButtons>
        </TitleBar>
        <Client>
          <MenuBar>
            <FormIcon />
            <MenuItems>
              {menus.map((m) => <MenuItem key={m}>{m}</MenuItem>)}
            </MenuItems>
            <ChildButtons>
              <ChildButton aria-label="Minimize document"><Svg s={8}><path d="M1 6.500h6" stroke="#5c6b80" strokeWidth="2" /></Svg></ChildButton>
              <ChildButton aria-label="Restore document">
                <Svg s={9}><path d="M2.500 3V1h6v4.500H6.500M.5 3.500h6v4.500h-6zM.5 4h6M2.500 1.500h6" stroke="#5c6b80" /></Svg>
              </ChildButton>
              <ChildButton aria-label="Close document"><Svg s={8}><path d="M1 1l6 6M7 1L1 7" stroke="#5c6b80" strokeWidth="2" /></Svg></ChildButton>
            </ChildButtons>
          </MenuBar>
          <ToolBar>
            {toolGroups.map((g) => (
              <ToolGroup key={g[0]}>
                {g.map((n) => <ToolButton key={n} aria-label={n}>{toolIcons[n]}</ToolButton>)}
              </ToolGroup>
            ))}
            <ToolGroup $end>
              {["dynamics", "help"].map((n) => <ToolButton key={n} aria-label={n}>{toolIcons[n]}</ToolButton>)}
            </ToolGroup>
          </ToolBar>
          <Body>
            <Sidebar>
              <SidePanel>
                <SideTitle>Οικονομική Διαχείριση</SideTitle>
                <Tree>
                  <li>
                    <FolderRow label="Γενική Λογιστική" open />
                    <SubTree>
                      {forms.map((f, i) => (
                        <li key={f}>
                          <TreeRow>
                            <Stem $long />
                            <FormIcon />
                            <TreeLabel href="#" $selected={i === 0}>{f}</TreeLabel>
                          </TreeRow>
                        </li>
                      ))}
                      {subFolders.map((f, i) => (
                        <li key={f}><FolderRow label={f} last={i === subFolders.length - 1} /></li>
                      ))}
                    </SubTree>
                  </li>
                  {folders.map((f, i) => (
                    <li key={f}><FolderRow label={f} last={i === folders.length - 1} /></li>
                  ))}
                </Tree>
                <Splitter><SplitterDots /></Splitter>
                {areas.map(([icon, label], i) => (
                  <NavButton key={label} $active={i === 0}>
                    {navIcons[icon]}
                    <NavLabel>{label}</NavLabel>
                  </NavButton>
                ))}
                <NavFooter>
                  <Spinner>
                    <ArrowButton aria-label="Previous"><TriUp /></ArrowButton>
                    <ArrowButton aria-label="Next"><TriDown /></ArrowButton>
                  </Spinner>
                </NavFooter>
              </SidePanel>
            </Sidebar>
            <Main>
              <GridFrame>
                <Grid>
                  <colgroup>
                    {columns.map(([w], i) => <Col key={i} $w={w} />)}
                  </colgroup>
                  <thead>
                    <tr>{columns.map(([, t], i) => <HeadCell key={i}>{t}</HeadCell>)}</tr>
                  </thead>
                  <tbody>
                    {accounts.map(([no, name], i) => {
                      const bold = no.length < 8;
                      return (
                        <tr key={no}>
                          <SelectorCell>{i === 0 && <RowMark />}</SelectorCell>
                          <Cell $pad={3} $bold={bold} $focus={i === 0}>{no}</Cell>
                          <Cell $pad={3} $bold={bold}>{name}</Cell>
                          <Cell>Ι...</Cell>
                          <Cell>{bold ? "Σ..." : "Κ..."}</Cell>
                          <Cell />
                          <Cell />
                          <Cell />
                          <Cell $pad={0}><Tick /></Cell>
                          <Cell />
                        </tr>
                      );
                    })}
                  </tbody>
                </Grid>
                <Scroller>
                  <ScrollHead />
                  <ArrowButton $tall aria-label="Scroll up"><TriUp /></ArrowButton>
                  <ScrollThumb />
                  <ScrollTrack />
                  <ArrowButton $tall aria-label="Scroll down"><TriDown /></ArrowButton>
                </Scroller>
              </GridFrame>
              <Actions>
                <ActionButton $primary>OK</ActionButton>
                <ActionButton>Άκυρο</ActionButton>
                <ActionButton $menu><span><u>Λ</u>ογαριασ...</span><MenuTri /></ActionButton>
                <ActionButton $menu><span><u>Υ</u>πόλοιπα</span><MenuTri /></ActionButton>
                <ActionButton>Βοήθεια</ActionButton>
              </Actions>
            </Main>
          </Body>
          <StatusBar>
            <StatusCell>Αρ.: 01</StatusCell>
            <StatusCell $w={118} />
            <StatusCell $w={61}>27/01/11</StatusCell>
            <StatusCell $w={60} />
            <StatusCell $w={61} />
            <StatusCell $w={125} />
            <Grip>
              <Svg s={12}><path d="M9 3h2M6 6h2M9 6h2M3 9h2M6 9h2M9 9h2" stroke="#b5b5b5" strokeWidth="2" /></Svg>
            </Grip>
          </StatusBar>
        </Client>
      </Window>
    </Desktop>
  );
}
